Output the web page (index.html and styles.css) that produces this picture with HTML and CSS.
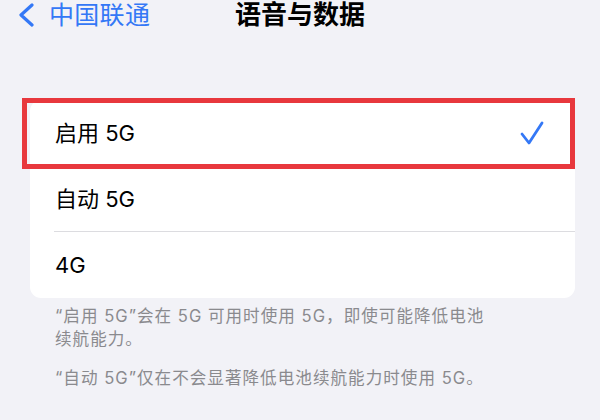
FILE: index.html
```html
<!DOCTYPE html>
<html lang="zh-CN">
<head>
<meta charset="utf-8">
<title>语音与数据</title>
<link rel="stylesheet" href="styles.css">
</head>
<body>
<div class="screen">
  <header class="nav">
    <div class="back">
      <svg class="chevron" width="16" height="24" viewBox="0 0 16 24">
        <path d="M14 2 L3 12 L14 22" fill="none" stroke="#3478f6" stroke-width="3.2" stroke-linecap="round" stroke-linejoin="round"/>
      </svg>
      <span class="back-label">中国联通</span>
    </div>
    <h1 class="title">语音与数据</h1>
    <div class="spacer"></div>
  </header>

  <section class="group">
    <div class="row">
      <div class="row-inner no-sep">
        <span class="label">启用 5G</span>
        <svg class="check" width="24" height="24" viewBox="0 0 24 24">
          <path d="M2 13 L9 22 L22 2" fill="none" stroke="#3478f6" stroke-width="2.8" stroke-linecap="round" stroke-linejoin="round"/>
        </svg>
      </div>
    </div>
    <div class="row">
      <div class="row-inner">
        <span class="label">自动 5G</span>
      </div>
    </div>
    <div class="row">
      <div class="row-inner no-sep">
        <span class="label">4G</span>
      </div>
    </div>
    <div class="highlight"></div>
  </section>

  <footer class="notes">
    <p class="note">“启用 5G”会在 5G 可用时使用 5G，即使可能降低电池续航能力。</p>
    <p class="note">“自动 5G”仅在不会显著降低电池续航能力时使用 5G。</p>
  </footer>
</div>
</body>
</html>
```

FILE: styles.css
```css
* {
  box-sizing: border-box;
}

html, body {
  margin: 0;
  padding: 0;
  background: #f2f2f7;
}

body {
  font-family: "Inter", "Noto Sans CJK SC", "Noto Sans", sans-serif;
  color: #000;
}

.screen {
  width: 600px;
  height: 420px;
  overflow: hidden;
  background: #f2f2f7;
}

.nav {
  display: grid;
  grid-template-columns: 1fr auto 1fr;
  align-items: center;
  height: 30px;
}

.back {
  display: flex;
  align-items: center;
  gap: 15px;
  padding-left: 18px;
  color: #3478f6;
}

.chevron {
  display: block;
}

.back-label {
  font-size: 25px;
  line-height: 30px;
  letter-spacing: 0.3px;
}

.title {
  margin: 0;
  font-size: 26px;
  line-height: 30px;
  font-weight: 700;
  color: #000;
}

.group {
  position: relative;
  margin: 70px 25px 0 30px;
  background: #fff;
  border-radius: 11px;
}

.row {
  padding-left: 24px;
  height: 66px;
}

.row-inner {
  height: 100%;
  display: flex;
  align-items: center;
  justify-content: space-between;
  padding-left: 1px;
  padding-right: 31px;
  border-bottom: 1px solid #dcdce0;
}

.row-inner.no-sep {
  border-bottom: none;
}

.label {
  font-size: 22px;
  line-height: 30px;
  color: #000;
}

.check {
  display: block;
}

.highlight {
  position: absolute;
  left: -8px;
  top: -2px;
  right: 0;
  height: 71px;
  border: 5px solid #e8383d;
}

.notes {
  padding: 7px 0 0 55px;
  width: 491px;
}

.note {
  margin: 0 0 16px 0;
  font-size: 16.6px;
  line-height: 23px;
  letter-spacing: 1px;
  color: #8a8a8e;
}
```
